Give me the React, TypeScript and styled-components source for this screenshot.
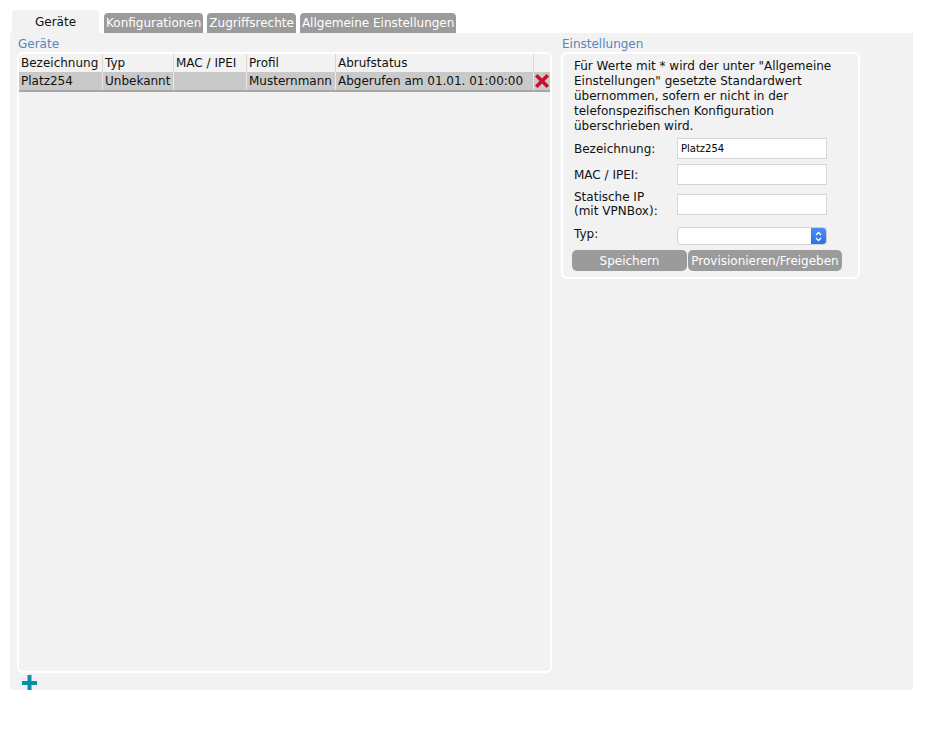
import React from "react";
import styled, { createGlobalStyle } from "styled-components";

const GlobalStyle = createGlobalStyle`
  body {
    margin: 0;
    background: #ffffff;
    font-family: "DejaVu Sans", Verdana, sans-serif;
    font-size: 12px;
    color: #111;
  }
`;

const Page = styled.div`
  padding: 10px 30px 0 10px;
  width: 903px;
`;

const TabBar = styled.div`
  display: flex;
  align-items: flex-end;
  gap: 4px;
  height: 23px;
  padding-left: 2px;
`;

const Tab = styled.div<{ $active?: boolean }>`
  height: ${(p) => (p.$active ? "23px" : "20px")};
  padding: 0 ${(p) => (p.$active ? "23px" : "2px")};
  margin-right: ${(p) => (p.$active ? "1px" : "0")};
  display: flex;
  align-items: center;
  justify-content: center;
  border-radius: 4px 4px 0 0;
  background: ${(p) => (p.$active ? "#f2f2f2" : "#9b9b9b")};
  color: ${(p) => (p.$active ? "#111" : "#ffffff")};
  font-size: 12px;
  box-sizing: border-box;
`;

const Panel = styled.div`
  background: #f2f2f2;
  border-radius: 0 0 4px 4px;
  height: 657px;
  padding: 4px 7px 0 7px;
  box-sizing: border-box;
  display: flex;
  gap: 9px;
`;

const Column = styled.div<{ $width: number }>`
  width: ${(p) => p.$width}px;
  display: flex;
  flex-direction: column;
`;

const SectionTitle = styled.div`
  color: #5b86b8;
  font-size: 12px;
  height: 15px;
  line-height: 15px;
  padding-left: 1px;
`;

const Box = styled.div<{ $height: number }>`
  border: 2px solid #ffffff;
  border-radius: 6px;
  height: ${(p) => p.$height}px;
  flex-shrink: 0;
  box-sizing: border-box;
`;

const Table = styled.table`
  border-collapse: collapse;
  width: 100%;
  font-size: 12px;
  td {
    height: 18px;
    padding: 0 2px;
    white-space: nowrap;
    border-left: 1px solid #ffffff;
  }
  td:first-child {
    border-left: none;
  }
`;

const HeadRow = styled.tr`
  td {
    border-left: 1px solid #d8d8d8;
  }
`;

const DataRow = styled.tr`
  td {
    background: #c9c9c9;
    border-bottom: 2px solid #a8a8a8;
    border-left: 1px solid #e9e9e9;
  }
`;

const DeleteCell = styled.td`
  width: 16px;
  text-align: center;
  padding: 0 !important;
  svg {
    display: block;
    margin: 0 auto;
  }
`;

const AddRow = styled.div`
  padding: 2px 0 0 5px;
  height: 16px;
  svg {
    display: block;
  }
`;

const FormBox = styled(Box)`
  padding: 5px 10px 0 11px;
`;

const Intro = styled.p`
  margin: 0 0 4px 0;
  font-size: 12px;
  line-height: 15px;
`;

const FormGrid = styled.div`
  display: grid;
  grid-template-columns: 103px 150px;
  row-gap: 5px;
  align-items: center;
`;

const Label = styled.label`
  font-size: 12px;
  line-height: 14px;
`;

const Input = styled.input`
  width: 150px;
  height: 21px;
  box-sizing: border-box;
  border: 1px solid #d5d5d5;
  background: #fff;
  font-family: "DejaVu Sans", Verdana, sans-serif;
  font-size: 10px;
  padding: 2px 3px;
  outline: none;
`;

const SelectBox = styled.div`
  width: 150px;
  height: 18px;
  box-sizing: border-box;
  border: 1px solid #d0d0d0;
  border-radius: 4px;
  background: #fff;
  display: flex;
  justify-content: flex-end;
  overflow: hidden;
  margin-top: 4px;
`;

const SelectArrow = styled.div`
  width: 15px;
  height: 100%;
  background: linear-gradient(#4a90f5, #2f6fe8);
  display: flex;
  align-items: center;
  justify-content: center;
`;

const ButtonRow = styled.div`
  display: flex;
  margin: 5px 0 0 -2px;
`;

const Button = styled.button<{ $width: number }>`
  width: ${(p) => p.$width}px;
  height: 21px;
  border: none;
  border-radius: 5px;
  background: #9b9b9b;
  color: #fff;
  font-family: "DejaVu Sans", Verdana, sans-serif;
  font-size: 12px;
  padding: 0;
  margin-right: 1px;
`;

const App: React.FC = () => {
  return (
    <>
      <GlobalStyle />
      <Page>
        <TabBar>
          <Tab $active>Geräte</Tab>
          <Tab>Konfigurationen</Tab>
          <Tab>Zugriffsrechte</Tab>
          <Tab>Allgemeine Einstellungen</Tab>
        </TabBar>
        <Panel>
          <Column $width={535}>
            <SectionTitle>Geräte</SectionTitle>
            <Box $height={621}>
              <Table>
                <tbody>
                  <HeadRow>
                    <td style={{ width: 79 }}>Bezeichnung</td>
                    <td style={{ width: 66 }}>Typ</td>
                    <td style={{ width: 68 }}>MAC / IPEI</td>
                    <td style={{ width: 84 }}>Profil</td>
                    <td>Abrufstatus</td>
                    <DeleteCell />
                  </HeadRow>
                  <DataRow>
                    <td>Platz254</td>
                    <td>Unbekannt</td>
                    <td></td>
                    <td>Musternmann</td>
                    <td>Abgerufen am 01.01. 01:00:00</td>
                    <DeleteCell>
                      <svg width="16" height="16" viewBox="0 0 16 16">
                        <path
                          d="M1 3.5 L3.5 1 L8 5.5 L12.5 1 L15 3.5 L10.5 8 L15 12.5 L12.5 15 L8 10.5 L3.5 15 L1 12.5 L5.5 8 Z"
                          fill="#c8102e"
                        />
                      </svg>
                    </DeleteCell>
                  </DataRow>
                </tbody>
              </Table>
            </Box>
            <AddRow>
              <svg width="15" height="16" viewBox="0 0 15 16">
                <rect x="5.5" y="0" width="4" height="16" fill="#0a8fa6" />
                <rect x="0" y="6" width="15" height="4" fill="#0a8fa6" />
              </svg>
            </AddRow>
          </Column>
          <Column $width={299}>
            <SectionTitle>Einstellungen</SectionTitle>
            <FormBox $height={227}>
              <Intro>
                Für Werte mit * wird der unter "Allgemeine Einstellungen"
                gesetzte Standardwert übernommen, sofern er nicht in der
                telefonspezifischen Konfiguration überschrieben wird.
              </Intro>
              <FormGrid>
                <Label>Bezeichnung:</Label>
                <Input defaultValue="Platz254" />
                <Label>MAC / IPEI:</Label>
                <Input />
                <Label>
                  Statische IP
                  <br />
                  (mit VPNBox):
                </Label>
                <Input />
                <Label>Typ:</Label>
                <SelectBox>
                  <SelectArrow>
                    <svg width="7" height="11" viewBox="0 0 7 11">
                      <path
                        d="M1 4 L3.5 1.5 L6 4 M1 7 L3.5 9.5 L6 7"
                        stroke="#fff"
                        strokeWidth="1.3"
                        fill="none"
                      />
                    </svg>
                  </SelectArrow>
                </SelectBox>
              </FormGrid>
              <ButtonRow>
                <Button $width={115}>Speichern</Button>
                <Button $width={154}>Provisionieren/Freigeben</Button>
              </ButtonRow>
            </FormBox>
          </Column>
        </Panel>
      </Page>
    </>
  );
};

export default App;
